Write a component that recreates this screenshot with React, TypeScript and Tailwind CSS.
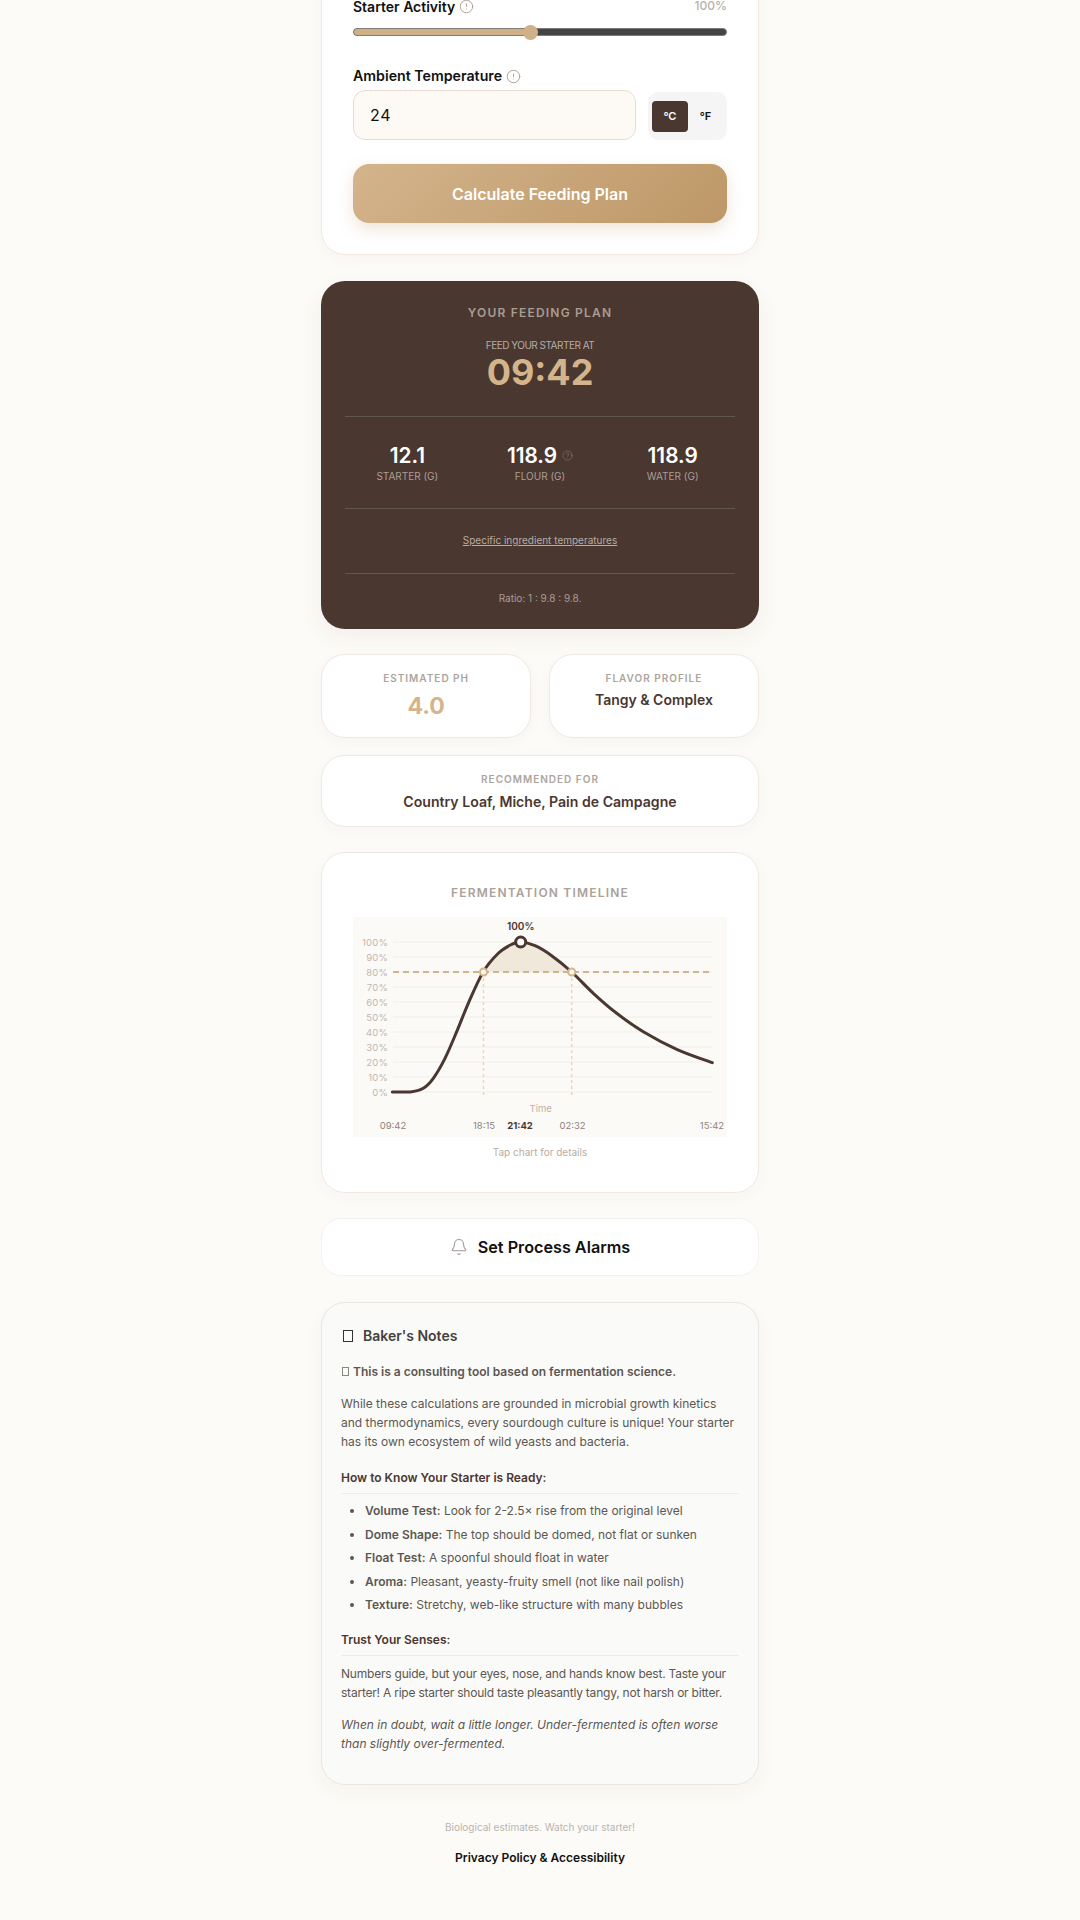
import { Bell, CircleAlert, CircleHelp } from "lucide-react";

// chart points in svg coords (0,0 is the top left of the grey chart box)
const curve: [number, number][] = [
  [39.3, 175],
  [58.7, 174.7],
  [70.3, 171.3],
  [80.3, 161.3],
  [92, 141.3],
  [103.7, 114.7],
  [115.3, 86.3],
  [130.3, 54.7],
  [145.3, 36.3],
  [158.7, 27.3],
  [167.7, 25],
  [182, 28.7],
  [198.7, 38.7],
  [218.7, 55],
  [240.3, 76.3],
  [263.7, 96.3],
  [290.3, 114.7],
  [323.7, 132.3],
  [359.3, 145.7],
];

function smooth(pts: [number, number][]) {
  let d = `M${pts[0][0]} ${pts[0][1]}`;
  for (let i = 0; i < pts.length - 1; i++) {
    const p0 = pts[i - 1] ?? pts[i];
    const p1 = pts[i];
    const p2 = pts[i + 1];
    const p3 = pts[i + 2] ?? p2;
    const c1x = p1[0] + (p2[0] - p0[0]) / 6;
    const c1y = p1[1] + (p2[1] - p0[1]) / 6;
    const c2x = p2[0] - (p3[0] - p1[0]) / 6;
    const c2y = p2[1] - (p3[1] - p1[1]) / 6;
    d += ` C${c1x.toFixed(1)} ${c1y.toFixed(1)} ${c2x.toFixed(1)} ${c2y.toFixed(1)} ${p2[0]} ${p2[1]}`;
  }
  return d;
}

const percents = [100, 90, 80, 70, 60, 50, 40, 30, 20, 10, 0];

function Chart() {
  const above = curve.slice(7, 14);
  return (
    <svg viewBox="0 0 374 220" className="block h-[220px] w-[374px] bg-[#fcfaf7]">
      {percents.map((p, i) => (
        <g key={p}>
          <line x1="40" x2="359" y1={25 + i * 15} y2={25 + i * 15} stroke="#f5f2ee" strokeWidth="1.5" />
          <text x="35" y={28.5 + i * 15} textAnchor="end" fontSize="9.5" letterSpacing="0.2" fill="#c2b6ae">
            {p}%
          </text>
        </g>
      ))}
      <path d={`${smooth(above)} Z`} fill="#f1e8dc" />
      <line x1="130.5" x2="130.5" y1="55" y2="178" stroke="#ebd6bb" strokeWidth="1.5" strokeDasharray="3 3" />
      <line x1="218.7" x2="218.7" y1="55" y2="178" stroke="#ebd6bb" strokeWidth="1.5" strokeDasharray="3 3" />
      <line x1="40" x2="359" y1="55" y2="55" stroke="#d4b48a" strokeWidth="2" strokeDasharray="6 4" />
      <path d={smooth(curve)} fill="none" stroke="#4a3730" strokeWidth="3" strokeLinecap="round" />
      <circle cx="130.5" cy="55" r="3.5" fill="#fcfaf7" stroke="#d4b48a" strokeWidth="2" />
      <circle cx="218.7" cy="55" r="3.5" fill="#fcfaf7" stroke="#d4b48a" strokeWidth="2" />
      <circle cx="167.7" cy="25" r="5" fill="#ffffff" stroke="#4a3730" strokeWidth="3" />
      <text x="167.7" y="13" textAnchor="middle" fontSize="10" fontWeight="600" fill="#4a3730">
        100%
      </text>
      <text x="187.7" y="195" textAnchor="middle" fontSize="9.5" fill="#bdb1a9">
        Time
      </text>
      <text x="40" y="212" textAnchor="middle" fontSize="9.5" fill="#8f8279">
        09:42
      </text>
      <text x="131" y="212" textAnchor="middle" fontSize="9.5" fill="#8f8279">
        18:15
      </text>
      <text x="167" y="212" textAnchor="middle" fontSize="9.5" fontWeight="700" fill="#4a3730">
        21:42
      </text>
      <text x="219.5" y="212" textAnchor="middle" fontSize="9.5" fill="#8f8279">
        02:32
      </text>
      <text x="359" y="212" textAnchor="middle" fontSize="9.5" fill="#8f8279">
        15:42
      </text>
    </svg>
  );
}

function Amount({ value, label, help }: { value: string; label: string; help?: boolean }) {
  return (
    <div className="flex flex-col items-center">
      <div className="flex h-[26px] items-center gap-[5px] text-[20.8px] font-semibold text-white">
        {value}
        {help && <CircleHelp className="h-[11px] w-[11px] text-[#7f736b]" strokeWidth={1.5} />}
      </div>
      <div className="text-[10px] leading-[17px] text-[#aa9e96]">{label}</div>
    </div>
  );
}

function StatLabel({ children }: { children: string }) {
  return <div className="text-[10px] leading-[16px] font-semibold tracking-[0.1em] text-[#aca59e] uppercase">{children}</div>;
}

function SectionHead({ children }: { children: string }) {
  return (
    <h4 className="border-b border-[#eeece8] pb-[5px] text-[12px] leading-[20px] font-semibold text-[#4a3730]">{children}</h4>
  );
}

function Test({ name, children }: { name: string; children: string }) {
  return (
    <li className="h-[23.6px] leading-[23px]">
      <strong className="font-semibold">{name}</strong> {children}
    </li>
  );
}

export default function App() {
  return (
    <div className="h-[1920px] overflow-hidden bg-[#fdfbf7] font-['Inter',sans-serif] text-[#111111]">
      <main className="mx-auto -mt-[38px] flex w-[438px] flex-col">
        {/* form card, scrolled past the top of the page */}
        <section className="rounded-[24px] border border-[#f1e8e2] bg-white px-[31px] pt-[31px] pb-[31px] shadow-[0_4px_16px_rgba(74,55,48,0.03)]">
          <div className="flex h-[24px] items-center justify-between">
            <label className="flex items-center gap-[4px] text-[14px] font-semibold">
              Starter Activity
              <CircleAlert className="h-[15px] w-[15px] text-[#ad9d91]" strokeWidth={1.5} />
            </label>
            <span className="text-[12px] font-medium text-[#b6b1ac]">100%</span>
          </div>
          <div className="mt-[10px] flex h-[8px] overflow-hidden rounded-full border border-[#7d7d7d] bg-[#444444]">
            <div className="w-[177px] bg-[#d0b187]" />
          </div>
          <div className="relative">
            <div className="absolute -top-[11.5px] left-[170px] h-[15px] w-[15px] rounded-full bg-[#d0b187]" />
          </div>
          <div className="mt-[28px] flex h-[24px] items-center gap-[4px] text-[14.2px] font-semibold">
            Ambient Temperature
            <CircleAlert className="h-[15px] w-[15px] text-[#ad9d91]" strokeWidth={1.5} />
          </div>
          <div className="mt-[2px] flex items-end gap-[12px]">
            <div className="flex h-[50px] w-[283px] items-center rounded-[12px] border border-[#eadbd3] bg-[#fdfaf6] pl-[16px] text-[16px] tracking-[0.05em]">
              24
            </div>
            <div className="flex h-[48px] w-[79px] items-center rounded-[10px] bg-[#f5f5f5] pl-[4px] text-[11px] font-semibold">
              <span className="flex h-[31px] w-[36px] items-center justify-center rounded-[4px] bg-[#4a3730] text-white">°C</span>
              <span className="flex h-[31px] w-[35px] items-center justify-center">°F</span>
            </div>
          </div>
          <button
            type="button"
            className="mt-[24px] flex h-[59px] w-full items-center justify-center rounded-[16px] bg-[linear-gradient(135deg,#d4b48c,#bd9767)] text-[16px] font-semibold text-white shadow-[0_6px_16px_rgba(190,152,104,0.25)]"
          >
            Calculate Feeding Plan
          </button>
        </section>

        {/* results */}
        <section className="mt-[25.6px] h-[348px] rounded-[24px] bg-[#4a3730] px-[24px] pt-[22px] text-center shadow-[0_8px_24px_rgba(74,55,48,0.06)]">
          <h2 className="text-[12px] leading-[20px] font-semibold tracking-[0.1em] text-[#a99c93]">YOUR FEEDING PLAN</h2>
          <div className="mt-[13px] text-[10px] leading-[18px] tracking-[-0.05em] text-[#b7aca5]">FEED YOUR STARTER AT</div>
          <div className="text-[36px] leading-[36px] font-bold text-[#d4b48a]">09:42</div>
          <div className="mt-[26px] grid grid-cols-3 gap-2 border-y border-[#5e5850] pt-[25.5px] pb-[22.5px]">
            <Amount value="12.1" label="STARTER (G)" />
            <Amount value="118.9" label="FLOUR (G)" help />
            <Amount value="118.9" label="WATER (G)" />
          </div>
          <div className="flex h-[65px] items-center justify-center border-b border-[#5e5850] text-[10px] text-[#b7aca5] underline">
            Specific ingredient temperatures
          </div>
          <div className="mt-[15px] text-[10px] leading-[18px] text-[#aa9e96]">Ratio: 1 : 9.8 : 9.8.</div>
        </section>

        <div className="mt-[25.6px] grid grid-cols-2 gap-[17.6px]">
          <div className="h-[84px] rounded-[24px] border border-[#f1e8e2] bg-white pt-[15px] text-center shadow-[0_4px_16px_rgba(74,55,48,0.03)]">
            <StatLabel>Estimated pH</StatLabel>
            <div className="mt-[3px] text-[23px] leading-[34px] font-bold text-[#d4b48a]">4.0</div>
          </div>
          <div className="h-[84px] rounded-[24px] border border-[#f1e8e2] bg-white pt-[15px] text-center shadow-[0_4px_16px_rgba(74,55,48,0.03)]">
            <StatLabel>Flavor Profile</StatLabel>
            <div className="mt-[2px] text-[14px] leading-[24px] font-semibold text-[#4a3730]">Tangy & Complex</div>
          </div>
        </div>

        <div className="mt-[16.8px] h-[72px] rounded-[24px] border border-[#f1e8e2] bg-white pt-[15px] text-center shadow-[0_4px_16px_rgba(74,55,48,0.03)]">
          <StatLabel>Recommended for</StatLabel>
          <div className="mt-[3px] text-[14.1px] leading-[24px] font-semibold text-[#4a3730]">Country Loaf, Miche, Pain de Campagne</div>
        </div>

        {/* timeline */}
        <section className="mt-[25px] h-[340.8px] rounded-[24px] border border-[#f1e8e2] bg-white px-[31px] pt-[30px] text-center shadow-[0_4px_16px_rgba(74,55,48,0.03)]">
          <h3 className="text-[12px] leading-[20px] font-semibold tracking-[0.1em] text-[#aaa299]">FERMENTATION TIMELINE</h3>
          <div className="mt-[14px]">
            <Chart />
          </div>
          <div className="mt-[7px] text-[10px] leading-[16px] text-[#b8aca4]">Tap chart for details</div>
        </section>

        <button
          type="button"
          className="mt-[25.6px] flex h-[58px] items-center justify-center gap-[10px] rounded-[20px] border border-[#f3f1ee] bg-white text-[16.2px] font-semibold"
        >
          <Bell className="h-[18px] w-[18px] text-[#a39b96]" strokeWidth={1.5} />
          Set Process Alarms
        </button>

        {/* notes */}
        <section className="mt-[25.6px] h-[483px] rounded-[24px] border border-[#e9e7e3] bg-[#fafaf8] px-[19px] pt-[21px] shadow-[0_8px_20px_rgba(74,55,48,0.04)]">
          <h3 className="flex h-[24px] items-center text-[14px] font-semibold text-[#44403c]">
            <span className="mr-[10px] ml-[2px] h-[12px] w-[10px] border border-[#333333]" />
            Baker's Notes
          </h3>
          <div className="text-[12px] text-[#5c5752]">
            <p className="mt-[14px] flex items-center leading-[20px] font-semibold">
              <span className="mr-[4px] ml-[1px] h-[9px] w-[7px] border border-[#8a8680]" />
              This is a consulting tool based on fermentation science.
            </p>
            <p className="mt-[12px] leading-[19.2px]">
              While these calculations are grounded in microbial growth kinetics and thermodynamics, every sourdough culture is
              unique! Your starter has its own ecosystem of wild yeasts and bacteria.
            </p>
            <div className="mt-[16px]">
              <SectionHead>How to Know Your Starter is Ready:</SectionHead>
            </div>
            <ul className="mt-[5.5px] list-disc pl-[24px]">
              <Test name="Volume Test:">Look for 2-2.5× rise from the original level</Test>
              <Test name="Dome Shape:">The top should be domed, not flat or sunken</Test>
              <Test name="Float Test:">A spoonful should float in water</Test>
              <Test name="Aroma:">Pleasant, yeasty-fruity smell (not like nail polish)</Test>
              <Test name="Texture:">Stretchy, web-like structure with many bubbles</Test>
            </ul>
            <div className="mt-[12.7px]">
              <SectionHead>Trust Your Senses:</SectionHead>
            </div>
            <p className="mt-[8px] leading-[19.2px] tracking-[-0.018em]">
              Numbers guide, but your eyes, nose, and hands know best. Taste your starter! A ripe starter should taste pleasantly
              tangy, not harsh or bitter.
            </p>
            <p className="mt-[13px] leading-[19.2px] italic">
              When in doubt, wait a little longer. Under-fermented is often worse than slightly over-fermented.
            </p>
          </div>
        </section>

        <footer className="text-center">
          <p className="mt-[33px] text-[10px] leading-[18px] text-[#b9b5af]">Biological estimates. Watch your starter!</p>
          <p className="mt-[12px] text-[12px] leading-[20px] font-semibold">Privacy Policy & Accessibility</p>
        </footer>
      </main>
    </div>
  );
}
